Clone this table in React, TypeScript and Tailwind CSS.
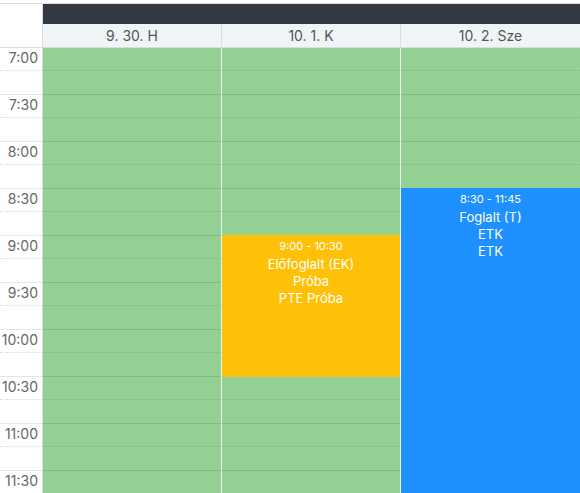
import React from "react";

const times = ["7:00", "7:30", "8:00", "8:30", "9:00", "9:30", "10:00", "10:30", "11:00", "11:30"];
const SLOT = 47;

function Slots() {
  return (
    <>
      {times.map((t) => (
        <div key={t} className="h-[47px] border-b border-[rgba(0,0,0,0.1)]">
          <div className="h-[23px] border-b border-dotted border-[rgba(0,0,0,0.1)]" />
        </div>
      ))}
    </>
  );
}

type Ev = { start: number; end: number; bg: string; time: string; lines: string[] };

function Event({ ev }: { ev: Ev }) {
  return (
    <div
      className={`absolute left-0 right-0 flex flex-col items-center pt-[4px] text-white ${ev.bg}`}
      style={{ top: ev.start * SLOT - 1, height: (ev.end - ev.start) * SLOT + 1 }}
    >
      <div className="text-[11px] leading-[14px]">{ev.time}</div>
      <div className="mt-[3px] flex flex-col items-center text-[13px] leading-[17px]">
        {ev.lines.map((l, i) => (
          <div key={i}>{l}</div>
        ))}
      </div>
    </div>
  );
}

function Column({ events, last }: { events: Ev[]; last?: boolean }) {
  return (
    <div className={`relative w-[179px] bg-[#94cf94] ${last ? "" : "border-r border-[#eef2ee]"}`}>
      <Slots />
      {events.map((e, i) => (
        <Event key={i} ev={e} />
      ))}
    </div>
  );
}

export default function App() {
  const days = ["9. 30. H", "10. 1. K", "10. 2. Sze"];
  return (
    <div
      className="w-[580px] h-[493px] overflow-hidden bg-white"
      style={{ fontFamily: "Inter, 'Noto Sans', sans-serif" }}
    >
      <div className="h-[3px]" />
      <div className="flex border-t border-[#dddddd]">
        <div className="w-[43px] border-r border-[#dddddd]" />
        <div className="h-[20px] flex-1 bg-[#343a42]" />
      </div>
      <div className="flex h-[24px] border-b border-[#dddddd]">
        <div className="w-[43px] border-r border-[#dddddd]" />
        {days.map((d, i) => (
          <div
            key={d}
            className={`flex w-[179px] items-center justify-center bg-[#eff5f6] text-[14px] text-[#555] ${
              i < 2 ? "border-r border-[#dddddd]" : ""
            }`}
          >
            {d}
          </div>
        ))}
      </div>
      <div className="flex">
        <div className="w-[43px] border-r border-[#dddddd]">
          {times.map((t) => (
            <div key={t} className="relative h-[47px] border-b border-[rgba(0,0,0,0.1)]">
              <div className="h-[23px] border-b border-dotted border-[rgba(0,0,0,0.15)]">
                <div className="pr-[4px] text-right text-[14px] leading-5 text-[#666]">{t}</div>
              </div>
            </div>
          ))}
        </div>
        <Column events={[]} />
        <Column
          events={[
            { start: 4, end: 7, bg: "bg-[#ffc107]", time: "9:00 - 10:30", lines: ["Előfoglalt (EK)", "Próba", "PTE Próba"] },
          ]}
        />
        <Column
          last
          events={[
            { start: 3, end: 9.5, bg: "bg-[#1e90ff]", time: "8:30 - 11:45", lines: ["Foglalt (T)", "ETK", "ETK"] },
          ]}
        />
      </div>
    </div>
  );
}
